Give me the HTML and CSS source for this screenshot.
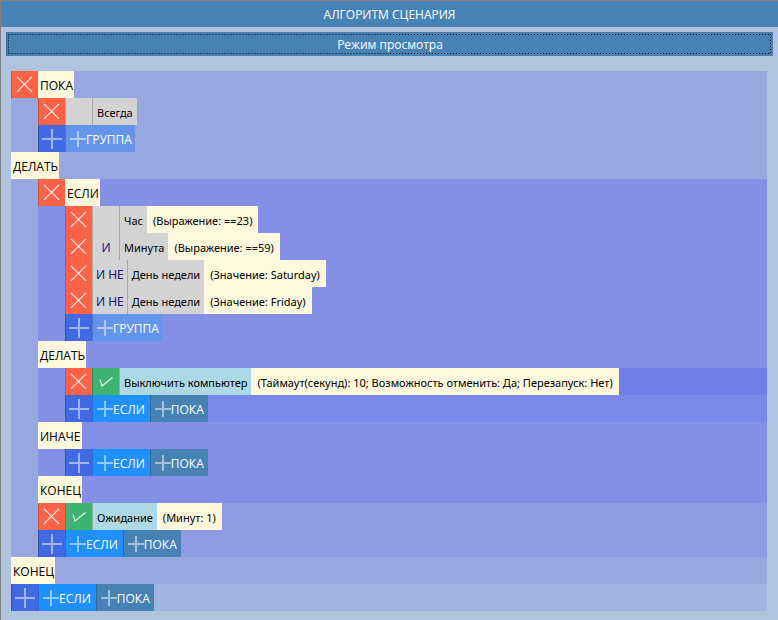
FILE: index.html
```html
<!DOCTYPE html>
<html lang="ru">
<head>
<meta charset="utf-8">
<title>Алгоритм сценария</title>
<link rel="stylesheet" href="styles.css">
</head>
<body>
<svg class="defs" aria-hidden="true">
  <symbol id="cross" viewBox="0 0 27 27"><path d="M5 5.8L20 20.8M20 5.8L5 20.8" stroke="#fff" stroke-opacity=".9" stroke-width="1.2" fill="none"/></symbol>
  <symbol id="check" viewBox="0 0 27 27"><path d="M7 11.5L9 18L19.5 9.5" stroke="#fff" stroke-opacity=".9" stroke-width="1.2" fill="none"/></symbol>
  <symbol id="plus" viewBox="0 0 20 20"><path d="M10 0V20M0 10H20" stroke="#fff" stroke-opacity=".5" stroke-width="2" fill="none"/></symbol>
  <symbol id="plus-small" viewBox="0 0 16 16"><path d="M8 0V16M0 8H16" stroke="#fff" stroke-opacity=".5" stroke-width="2" fill="none"/></symbol>
</svg>
<main class="panel">
  <h1 class="title">АЛГОРИТМ СЦЕНАРИЯ</h1>
  <button class="mode" type="button">Режим просмотра</button>
  <div class="tree">
    <section class="block loop">
      <div class="row"><button class="del" type="button" aria-label="Удалить"><svg><use href="#cross"/></svg></button><span class="word">ПОКА</span></div>
      <div class="nest">
        <div class="row"><button class="del" type="button" aria-label="Удалить"><svg><use href="#cross"/></svg></button><button class="op" type="button" aria-label="Оператор"></button><button class="name" type="button">Всегда</button></div>
        <div class="row"><button class="add" type="button" aria-label="Добавить"><svg><use href="#plus"/></svg></button><button class="more group" type="button"><svg><use href="#plus-small"/></svg>ГРУППА</button></div>
      </div>
      <div class="row"><span class="word">ДЕЛАТЬ</span></div>
      <div class="nest steps">
        <section class="block branch">
          <div class="row"><button class="del" type="button" aria-label="Удалить"><svg><use href="#cross"/></svg></button><span class="word">ЕСЛИ</span></div>
          <div class="nest">
            <div class="row"><button class="del" type="button" aria-label="Удалить"><svg><use href="#cross"/></svg></button><button class="op" type="button" aria-label="Оператор"></button><button class="name" type="button">Час</button><span class="param">(Выражение: ==23)</span></div>
            <div class="row"><button class="del" type="button" aria-label="Удалить"><svg><use href="#cross"/></svg></button><button class="op" type="button">И</button><button class="name" type="button">Минута</button><span class="param">(Выражение: ==59)</span></div>
            <div class="row"><button class="del" type="button" aria-label="Удалить"><svg><use href="#cross"/></svg></button><button class="op" type="button">И НЕ</button><button class="name" type="button">День недели</button><span class="param">(Значение: Saturday)</span></div>
            <div class="row"><button class="del" type="button" aria-label="Удалить"><svg><use href="#cross"/></svg></button><button class="op" type="button">И НЕ</button><button class="name" type="button">День недели</button><span class="param">(Значение: Friday)</span></div>
            <div class="row"><button class="add" type="button" aria-label="Добавить"><svg><use href="#plus"/></svg></button><button class="more group" type="button"><svg><use href="#plus-small"/></svg>ГРУППА</button></div>
          </div>
          <div class="row"><span class="word">ДЕЛАТЬ</span></div>
          <div class="nest actions">
            <div class="row action"><button class="del" type="button" aria-label="Удалить"><svg><use href="#cross"/></svg></button><button class="on" type="button" aria-label="Включено"><svg><use href="#check"/></svg></button><button class="name step" type="button">Выключить компьютер</button><span class="param">(Таймаут(секунд): 10; Возможность отменить: Да; Перезапуск: Нет)</span></div>
            <div class="row"><button class="add" type="button" aria-label="Добавить"><svg><use href="#plus"/></svg></button><button class="more if" type="button"><svg><use href="#plus-small"/></svg>ЕСЛИ</button><button class="more while" type="button"><svg><use href="#plus-small"/></svg>ПОКА</button></div>
          </div>
          <div class="row"><span class="word">ИНАЧЕ</span></div>
          <div class="nest">
            <div class="row"><button class="add" type="button" aria-label="Добавить"><svg><use href="#plus"/></svg></button><button class="more if" type="button"><svg><use href="#plus-small"/></svg>ЕСЛИ</button><button class="more while" type="button"><svg><use href="#plus-small"/></svg>ПОКА</button></div>
          </div>
          <div class="row"><span class="word">КОНЕЦ</span></div>
        </section>
        <div class="row"><button class="del" type="button" aria-label="Удалить"><svg><use href="#cross"/></svg></button><button class="on" type="button" aria-label="Включено"><svg><use href="#check"/></svg></button><button class="name step" type="button">Ожидание</button><span class="param">(Минут: 1)</span></div>
        <div class="row"><button class="add" type="button" aria-label="Добавить"><svg><use href="#plus"/></svg></button><button class="more if" type="button"><svg><use href="#plus-small"/></svg>ЕСЛИ</button><button class="more while" type="button"><svg><use href="#plus-small"/></svg>ПОКА</button></div>
      </div>
      <div class="row"><span class="word">КОНЕЦ</span></div>
    </section>
    <div class="row"><button class="add" type="button" aria-label="Добавить"><svg><use href="#plus"/></svg></button><button class="more if" type="button"><svg><use href="#plus-small"/></svg>ЕСЛИ</button><button class="more while" type="button"><svg><use href="#plus-small"/></svg>ПОКА</button></div>
  </div>
</main>
</body>
</html>
```
FILE: styles.css
```css
* { box-sizing: border-box; }

body {
  margin: 0;
  background: #b0c4de;
  color: #000;
  font: 12px/26px "Open Sans", "Noto Sans", sans-serif;
}

button {
  margin: 0;
  padding: 0;
  border: 0;
  border-radius: 0;
  color: inherit;
  font: inherit;
  white-space: nowrap;
}

.defs { position: absolute; width: 0; height: 0; }

.panel {
  min-height: 100vh;
  border-top: 1px solid #808080;
  border-left: 1px solid #808080;
}

.title {
  margin: 0;
  padding-top: 2px;
  background: #4682b4;
  color: #fff;
  font-size: 12px;
  font-weight: 400;
  line-height: 24px;
  text-align: center;
}

.mode {
  position: relative;
  display: block;
  width: calc(100% - 10px);
  height: 24px;
  margin: 5px 5px 15px;
  padding-top: 2px;
  border-left: 1px solid #38688f;
  background: #4682b4;
  color: #fff;
  line-height: 22px;
}

/* keyboard focus outline: dashes on the left half, dots on the right */
.mode::after {
  content: "";
  position: absolute;
  inset: 2px 2px 2px 1px;
  background:
    repeating-linear-gradient(90deg, #234159 0 2px, transparent 2px 3px) 0 0 / 50% 1px no-repeat,
    repeating-linear-gradient(90deg, #234159 0 2px, transparent 2px 3px) 0 100% / 50% 1px no-repeat,
    repeating-linear-gradient(90deg, #000 0 1px, transparent 1px 3px) 100% 0 / 50% 1px no-repeat,
    repeating-linear-gradient(90deg, #000 0 1px, transparent 1px 3px) 100% 100% / 50% 1px no-repeat,
    repeating-linear-gradient(180deg, #234159 0 2px, transparent 2px 3px) 0 0 / 1px 100% no-repeat,
    repeating-linear-gradient(180deg, #000 0 1px, transparent 1px 3px) 100% 0 / 1px 100% no-repeat;
}

.tree { margin: 0 11px 0 10px; background: #a4b4e0; }
.loop { background: #99a7e1; }
.nest { margin-left: 27px; }
.steps { background: #8e9be2; }
.branch { background: #8490e6; }
.actions { background: #7a88e7; }
.action { background: #707de8; }

.row { display: flex; height: 27px; }
.row > * { flex: none; padding-top: 2px; white-space: nowrap; }

.row > .word { padding: 2px 1px 0 2px; background: #fff8dc; }
.row > .param { padding: 2px 6px 0; background: #fff8dc; }
.row > .name,
.row > .param { font-family: "Noto Sans", "Open Sans", sans-serif; font-size: 11px; }

.del, .on, .add { width: 27px; border-left: 1px solid; }
.row > .del, .row > .on, .row > .add { padding: 0; }
.del { background: #ff6347; border-color: #cc4f39; }
.on { background: #3cb371; border-color: #308f5a; }
.add { background: #4169e1; border-color: #3454b4; }
.del svg, .on svg { display: block; width: 27px; height: 27px; }
.add svg { display: block; width: 20px; height: 20px; margin: 0 auto; }

.op, .name { border-left: 1px solid #a9a9a9; background: #d3d3d3; }
.row > .op { min-width: 27px; padding: 2px 3px 0; color: #00008b; }
.row > .name { padding: 2px 4px 0; }
.row > .step { border-color: #8aadb8; background: #add8e6; }

.row > .more {
  display: flex;
  align-items: center;
  padding: 2px 4px 0;
  border-left: 1px solid #386890;
  color: #fff;
}
.more svg { width: 16px; height: 16px; margin-top: -2px; }
.row > .group { padding-right: 3px; background: #6495ed; border-color: #5077be; }
.row > .if { padding-right: 5px; background: #1e90ff; border-color: #1873cc; }
.row > .while { background: #4682b4; border-color: #386890; }
```
